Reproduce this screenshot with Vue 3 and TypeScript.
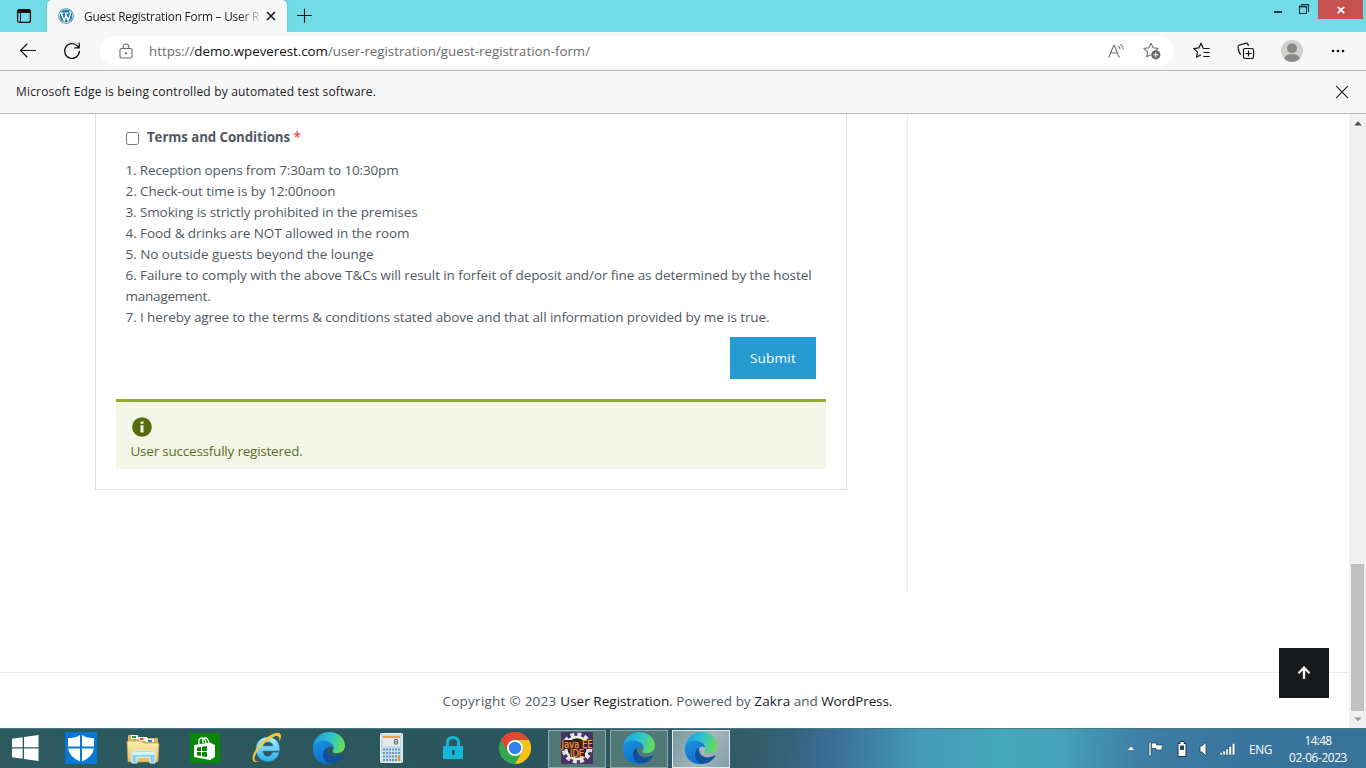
<script setup lang="ts">
interface Line { text: string; width: number }

const terms: Line[] = [
  { text: '1. Reception opens from 7:30am to 10:30pm', width: 273 },
  { text: '2. Check-out time is by 12:00noon', width: 210 },
  { text: '3. Smoking is strictly prohibited in the premises', width: 292 },
  { text: '4. Food & drinks are NOT allowed in the room', width: 284 },
  { text: '5. No outside guests beyond the lounge', width: 248 },
  { text: '6. Failure to comply with the above T&Cs will result in forfeit of deposit and/or fine as determined by the hostel', width: 686 },
  { text: 'management.', width: 85 },
  { text: '7. I hereby agree to the terms & conditions stated above and that all information provided by me is true.', width: 644 },
]

// Tracks a line of text so that it occupies the given width in pixels.
const vFit = {
  mounted(el: HTMLElement, binding: { value: number }) {
    const count = (el.textContent ?? '').trim().length
    const natural = el.getBoundingClientRect().width
    el.style.letterSpacing = `${(binding.value - natural) / count}px`
  },
}
</script>

<template>
  <div class="screen">
    <svg class="defs" width="0" height="0">
      <defs>
        <linearGradient id="eg1" x1="0" y1="0.3" x2="1" y2="0.5"><stop offset="0" stop-color="#1e9de0" /><stop offset=".5" stop-color="#2bc3d2" /><stop offset="1" stop-color="#66dc52" /></linearGradient>
        <linearGradient id="eg2" x1="0" y1="0" x2=".5" y2="1"><stop offset="0" stop-color="#1b93e0" /><stop offset="1" stop-color="#0d6fd0" /></linearGradient>
        <linearGradient id="fold" x1="0" y1="0" x2="0" y2="1"><stop offset="0" stop-color="#fdf0b4" /><stop offset="1" stop-color="#e3c266" /></linearGradient>
        <linearGradient id="ie" x1="0" y1="0" x2="0" y2="1"><stop offset="0" stop-color="#b5efff" /><stop offset="1" stop-color="#29aeea" /></linearGradient>
        <symbol id="edge" viewBox="0 0 32 32">
          <path fill="url(#eg2)" d="M0 15C1 9 6 7 11 8c5 1 9 4 9.500 7.500C15 13 11 17 12 21c1 5 4 9 7 10.700C8 34-1 27 0 15Z" />
          <path fill="#10509f" d="M14 15.500c-1 8 7 13 15.500 7.800.8-.3 1.200.2.800 1C27 30 20 33 15 31 9 28 8 19 14 15.500Z" />
          <path fill="url(#eg1)" d="M0 15C1 6 8 0 16 0c9 0 16 6 16 13.500 0 5.500-4.500 8-9 7.700-3-.2-4.300-1.200-3.200-2.700C23 14 17 8.500 10 8.500 5 8.500 1.500 11 0 15Z" />
        </symbol>
      </defs>
    </svg>

    <header class="tabs">
      <svg class="tabmenu" width="16" height="16" viewBox="0 0 16 16"><rect x="1.6" y="1.6" width="12.8" height="12.8" rx="2" fill="none" stroke="#111" stroke-width="1.3" /><path d="M2 2h12v2.500H2z" fill="#111" stroke="#111" /><path d="M4.500 5v9" stroke="#111" /></svg>
      <div class="tab">
        <svg class="wp" width="16" height="16" viewBox="0 0 16 16"><circle cx="8" cy="8" r="7.8" fill="#247ba5" /><circle cx="8" cy="8" r="6.8" fill="none" stroke="#e8f5fa" stroke-width=".8" /><path d="M2.3 5.1h3.2M6.5 5.1h3.6M3.2 5.2l3 7.6L8.2 7M7.3 5.2l2.8 7.6 2.3-6.5c.3-1-.8-2-.2-2.9" fill="none" stroke="#fff" stroke-width="1.35" /></svg>
        <div class="tabtitle"><span v-fit="175">Guest Registration Form – User R</span></div>
        <svg class="tabx" width="10" height="10" viewBox="0 0 10 10"><path d="m1 1 8 8M9 1 1 9" stroke="#111" stroke-width="1.5" /></svg>
      </div>
      <svg class="plus" width="16" height="16" viewBox="0 0 16 16"><path d="M8.500 .8v14M1 7.500h14.800" stroke="#111" stroke-width="1.1" /></svg>
      <div class="wincontrols">
        <svg width="50" height="19" viewBox="0 0 50 19"><path d="M5 12h8" stroke="#173238" stroke-width="2" /><path d="M30.500 6.500h7v7h-7zM32 4.500h7.500v7.500" fill="none" stroke="#173238" stroke-width="1.1" /><path d="M30 6.500h8" stroke="#173238" stroke-width="1.8" /></svg>
        <div class="close"><svg width="8" height="8" viewBox="0 0 8 8"><path d="m.8.8 6.400 6.400m0-6.400L.8 7.200" stroke="#fff" stroke-width="1.7" /></svg></div>
      </div>
    </header>

    <div class="toolbar">
      <svg class="back" width="18" height="16" viewBox="0 0 18 16" fill="none" stroke="#111" stroke-width="1.2"><path d="M17 7.500H1.500M8.300 .8 1.500 7.500l6.800 6.700" /></svg>
      <svg class="reload" width="18" height="18" viewBox="0 0 18 18" fill="none" stroke="#111" stroke-width="1.3"><path d="M16.4 9a7.4 7.4 0 1 1-2-5.1l1.5 1.7M16.2.8v5h-5" /></svg>
      <div class="address">
        <svg class="lock" width="14" height="16" viewBox="0 0 14 16"><path d="M2.600 5.500h8.800q1.600 0 1.600 1.600v6.300q0 1.600-1.600 1.600H2.600Q1 15 1 13.400V7.100Q1 5.500 2.600 5.500ZM4.200 5.500V3.800a2.800 2.800 0 0 1 5.600 0v1.700" fill="none" stroke="#6c6c6c" stroke-width="1.1" /><circle cx="7" cy="10.300" r="1.100" fill="#666" /></svg>
        <span class="url" v-fit="441">https://<b>demo.wpeverest.com</b>/user-registration/guest-registration-form/</span>
        <svg class="aloud" width="17" height="16" viewBox="0 0 17 16" fill="none" stroke="#707070" stroke-width="1.1"><path d="M.8 14.500 5.800 2.200h.4l5 12.300M2.600 10h6.800M10.500 3.200q1.400 1.200 1.600 3M12.400 1.100q2.600 2.100 2.900 5.200" /></svg>
        <svg class="addstar" width="18" height="18" viewBox="0 0 18 18"><path d="m8 1.200 2.100 4.600 5 .6-2.500 2.300M8 1.200 5.900 5.800l-5 .6 3.700 3.400-1 5 4-2.100" fill="none" stroke="#707070" stroke-width="1.100" stroke-linejoin="round" /><circle cx="12.800" cy="12.800" r="4.600" fill="#666" /><path d="M10.200 12.800h5.200m-2.600-2.600v5.200" stroke="#fff" stroke-width="1.100" /></svg>
      </div>
      <svg class="favs" width="18" height="18" viewBox="0 0 18 18" fill="none" stroke="#111" stroke-width="1.200" stroke-linejoin="round"><path d="M10.200 6.200 8 1.200 5.800 5.900l-5 .7 3.700 3.500-1 5.100L8 12.700M10.200 6.500h6.500M10.500 10.500h6.200M10.500 14.500h6.200" /></svg>
      <svg class="coll" width="18" height="18" viewBox="0 0 18 18" fill="none" stroke="#111" stroke-width="1.200"><path d="M7.200 6.500h7.600q1.700 0 1.700 1.700v6.600q0 1.700-1.700 1.700H8.200q-1.700 0-1.700-1.700V8.200q0-1.700 1.700-1.700M8.500 11.500h6M11.500 8.500v6M4.200 12.500Q2.700 12 2.300 10.500L1 5.500Q.7 3.700 2.500 3l6-1.700q1.600-.4 2.400 1l.6 1.700" /></svg>
      <svg class="avatar" width="22" height="22" viewBox="0 0 22 22"><circle cx="11" cy="11" r="11" fill="#d2d0ce" /><circle cx="11" cy="8.200" r="4.900" fill="#8a8886" /><path d="M3 18.400Q5 14 11 14t8 4.400A11 11 0 0 1 3 18.400Z" fill="#8a8886" /></svg>
      <svg class="dots" width="14" height="4" viewBox="0 0 14 4"><circle cx="2" cy="2" r="1.300" /><circle cx="7" cy="2" r="1.300" /><circle cx="12" cy="2" r="1.300" /></svg>
    </div>

    <div class="infobar">
      <span v-fit="360">Microsoft Edge is being controlled by automated test software.</span>
      <svg width="14" height="14" viewBox="0 0 14 14"><path d="m1.200 1.200 11.600 11.600m0-11.600L1.200 12.800" stroke="#222" stroke-width="1.200" /></svg>
    </div>

    <div class="viewport">
      <main class="page">
        <div class="columns">
          <section class="form">
            <div class="agree"><i class="check"></i><strong v-fit="143">Terms and Conditions</strong><em>*</em></div>
            <div class="terms"><div v-for="line in terms" :key="line.text"><span v-fit="line.width">{{ line.text }}</span></div></div>
            <div class="actions"><button><span v-fit="46">Submit</span></button></div>
            <div class="notice">
              <svg width="20" height="20" viewBox="0 0 20 20"><circle cx="10" cy="10" r="9.800" fill="#576b11" /><path d="M8.500 4.400h3v2.300h-3zM8.500 8.300h3v7.200h-3z" fill="#f4f6e7" /></svg>
              <p><span v-fit="172">User successfully registered.</span></p>
            </div>
          </section>
          <aside class="side"></aside>
        </div>
        <footer class="foot"><span v-fit="117.5">Copyright © 2023 </span><b v-fit="109">User Registration</b><span v-fit="85">. Powered by </span><b v-fit="36">Zakra</b><span v-fit="31"> and </span><b v-fit="71">WordPress.</b></footer>
        <div class="totop"><svg width="14" height="14" viewBox="0 0 14 14"><path d="M7 13V2M1.500 7.200 7 1.700l5.500 5.500" fill="none" stroke="#fff" stroke-width="2.300" /></svg></div>
      </main>
      <div class="scroll">
        <svg width="8" height="5" viewBox="0 0 8 5"><path d="M4 .2 7.800 4.500H.2z" fill="#505050" /></svg>
        <div class="thumb"></div>
        <svg class="down" width="8" height="5" viewBox="0 0 8 5"><path d="M4 4.500 7.800.3H.2z" fill="#a0a0a0" /></svg>
      </div>
    </div>

    <nav class="taskbar">
      <div class="start"><svg width="27" height="26" viewBox="0 0 27 26"><path d="M0 3.800 10.700 2.300v10H0zM12 2.100 26.500 0v12.300H12zM0 13.600h10.700v10.100L0 22.200zM12 13.600h14.500V26L12 23.900z" fill="#fff" /></svg></div>
      <div class="app"><svg width="32" height="32" viewBox="0 0 32 32"><path d="M0 0h32v32H0z" fill="#0878d7" /><path d="M16 2.500q6 4 13 3.500v10q-1 9-13 14Q4 25 3 16V6q7 .5 13-3.500Z" fill="#fff" /><path d="M16 2v29M2 15.500h28" stroke="#0878d7" stroke-width="2" /></svg></div>
      <div class="app"><svg width="34" height="32" viewBox="0 0 34 32"><path d="M2 4q0-1 1-1h7l2 3h19q1 0 1 1v6H2z" fill="#d9b65d" /><path d="M5 3h7v4H5z" fill="#fff" /><path d="M6 4h4v2H6z" fill="#29a33a" /><path d="M12 5h9l1 4h-9z" fill="#fff" /><path d="M14 6h3.500v2H14z" fill="#ca4b24" /><path d="M20 7h8v3h-8z" fill="#fff" /><path d="M22 8h4v2h-4z" fill="#2f83d5" /><path d="M1 10q0-1 1-1h13l3 2h14q1 0 1 1l-1 17q0 1-1 1H3q-1 0-1-1z" fill="url(#fold)" stroke="#bd9b4d" stroke-width=".7" /><path d="M6 22q0-3 3-3h17q3 0 3 3v9h-5v-6H11v6H6z" fill="#8accef" stroke="#d9f5ff" /><path d="M7 20h21v3H7z" fill="#d5f3fd" /></svg></div>
      <div class="app"><svg width="30" height="30" viewBox="0 0 30 30"><path d="M0 0h30v30H0z" fill="#078607" /><path d="M4 12l16-2.500 5 2.500v12l-5 3-16-3z" fill="#fff" /><path d="M9 11q-1-6 3-6 3 0 4 5M13 10q-1-5 2-5t4 5" fill="none" stroke="#fff" stroke-width="1.300" /><path d="m7 14.500 4-.6v4H7zm5-.7 5-.8v5h-5zM7 19h4v4l-4-.6zm5 0h5v5l-5-.8z" fill="#078607" /></svg></div>
      <div class="app"><svg width="32" height="32" viewBox="0 0 32 32"><path fill-rule="evenodd" d="M28 20.500C26.500 26.500 22 29.500 17 29.500 10 29.500 5 24 5 17S10 5 17 5s12 5 11.700 14H12c0 7 7.500 7 9.500 1.500zM12 14h10c-.5-5.500-9-5.500-10 0Z" fill="url(#ie)" stroke="#2c93c9" stroke-width=".6" /><path d="M9 28.500C3 32 0 29 2.500 22 7 12 18 2 26 .8c5 0 5 4 2 9 1-4 0-6.500-4-5.500C16 7 6 18 4 24c-1.500 5 1 6 5 4.500Z" fill="#f7c932" /></svg></div>
      <div class="app"><svg width="32" height="32"><use href="#edge" /></svg></div>
      <div class="app"><svg width="23" height="30" viewBox="0 0 23 30"><rect x=".5" y=".5" width="22" height="29" rx="1" fill="#c6dceb" stroke="#eef7fd" /><path d="M3 3h17v2H3z" fill="#efa33c" /><path d="M3 5h17v8H3z" fill="#e3e9ee" /><path d="M14.500 6.500h3v4.500h-3zM14.500 8.700h3" fill="none" stroke="#375679" stroke-width=".8" /><path d="M3 16.500h17M3 20h17M3 23.500h17M3 27h17" stroke="#6f9ac2" stroke-width="2" stroke-dasharray="2 1" /><path d="M18 22h2v6h-2z" fill="#e59a26" /></svg></div>
      <div class="app"><svg width="22" height="24" viewBox="0 0 22 24"><rect x="1" y="10" width="20" height="13" fill="#17b5da" /><path d="M5.500 11V6.500q0-5 5.500-5t5.500 5V11" fill="none" stroke="#17b5da" stroke-width="3" /><path d="M10 14h2.500v5H10z" fill="#28545e" /></svg></div>
      <div class="app"><svg width="32" height="32" viewBox="0 0 32 32"><circle cx="16" cy="16" r="16" fill="#35a853" /><path d="M2.100 8A16 16 0 0 1 29.900 8H16a8 8 0 0 0-7 12z" fill="#e94335" /><path d="M29.900 8A16 16 0 0 1 16 32l7-12a8 8 0 0 0-7-12z" fill="#fbc116" /><circle cx="16" cy="16" r="8" fill="#fff" /><circle cx="16" cy="16" r="6.200" fill="#367fec" /></svg></div>
      <div class="app open"><svg width="32" height="32" viewBox="0 0 32 32"><path d="M0 0h32v32H0z" fill="#493360" /><circle cx="16" cy="16" r="13.500" fill="none" stroke="#e1dfe3" stroke-width="4" stroke-dasharray="4 3.070" /><circle cx="16" cy="16" r="11" fill="#251c29" stroke="#eee" stroke-width="2.500" /><path d="M0 8h32v9h-8v8H9v-8H0z" fill="#35232b" /><text x=".5" y="16" textLength="31" lengthAdjust="spacingAndGlyphs" class="java">Java EE</text><text x="9" y="24.500" textLength="14" lengthAdjust="spacingAndGlyphs" class="java">IDE</text></svg></div>
      <div class="app open"><svg width="32" height="32"><use href="#edge" /></svg></div>
      <div class="app open active"><svg width="32" height="32"><use href="#edge" /></svg></div>
      <div class="tray">
        <svg class="up" width="8" height="5" viewBox="0 0 8 5"><path d="m4 .3 3.800 4H.2z" fill="#fff" stroke="#234e68" stroke-width=".4" /></svg>
        <svg class="flag" width="18" height="18" viewBox="0 0 18 18"><path d="M2 2h2v14H2z" fill="#fff" stroke="#203f52" stroke-width=".6" /><path d="M4.500 3h5v2h6.500l-1.500 5h-5L9 8.500H4.500z" fill="#fff" stroke="#203f52" stroke-width=".7" /></svg>
        <svg class="battery" width="10" height="16" viewBox="0 0 10 16"><path d="M3 .5h4v2h2v13H1v-13h2z" fill="#fff" stroke="#173342" /><path d="M3 4.500h4v4.500H3z" fill="#244354" /></svg>
        <svg class="volume" width="9" height="16" viewBox="0 0 9 16"><path d="M1 5h2l4-4v14l-4-4H1z" fill="#fff" stroke="#203f52" stroke-width=".8" /></svg>
        <svg class="signal" width="17" height="14" viewBox="0 0 17 14"><path d="M1 10.500h2.200V13H1zM4 9h2.200v4H4zM7 7h2.200v6H7zM10 4.500h2.500V13H10zM13.300 1.500h2.500V13h-2.500z" fill="#fff" stroke="#203f52" stroke-width=".4" /></svg>
        <span class="lang"><span v-fit="23">ENG</span></span>
        <div class="clock"><span v-fit="27">14:48</span><span v-fit="58">02-06-2023</span></div>
      </div>
    </nav>
  </div>
</template>

<style scoped>
.screen { width: 1366px; height: 768px; overflow: hidden; display: flex; flex-direction: column; background: #fff; font-family: "Open Sans", "Noto Sans", sans-serif; color: #1b1b1b; white-space: nowrap; position: relative; }
.defs { position: absolute; }
svg { display: block; flex: none; }
.tabs { height: 32px; flex: none; background: #71dbe8; display: flex; align-items: flex-start; }
.tabmenu { margin: 8px 15px 0 16px; }
.tab { width: 240px; height: 32px; background: #f7f7f7; border-radius: 5px 5px 0 0; box-sizing: border-box; display: flex; align-items: center; padding-left: 11px; box-shadow: 0 0 2px #4aa8b4; clip-path: inset(0 -2px); }
.tabtitle { margin-left: 10px; width: 178px; font-size: 11.800px; line-height: 20px; -webkit-mask-image: linear-gradient(90deg, #000 155px, transparent 180px); mask-image: linear-gradient(90deg, #000 155px, transparent 180px); }
.tabx { margin-left: 4px; }
.plus { margin: 8px 0 0 9px; }
.wincontrols { margin-left: auto; display: flex; }
.wincontrols > svg { margin-right: -1px; }
.close { width: 45px; height: 19px; background: #c75050; margin-right: 3px; display: flex; align-items: center; justify-content: center; }
.toolbar { height: 38px; flex: none; background: #f7f7f7; border-bottom: 1px solid #b9b9b9; display: flex; align-items: center; }
.back { margin-left: 19px; }
.reload { margin-left: 26px; }
.address { margin-left: 19px; width: 1074px; height: 30px; border-radius: 15px; background: #fff; display: flex; align-items: center; }
.lock { margin-left: 19px; }
.url { margin-left: 16px; font-size: 13.300px; color: #6b6b6b; }
.url b { color: #111; font-weight: 400; }
.aloud { margin-left: 518px; }
.addstar { margin-left: 18px; }
.favs { margin-left: 19px; }
.coll { margin-left: 26px; }
.avatar { margin-left: 26px; }
.dots { margin-left: 28px; fill: #111; }
.infobar { height: 42px; flex: none; background: #f7f7f7; border-bottom: 1px solid #b9b9b9; display: flex; align-items: center; justify-content: space-between; padding: 0 17px 0 16px; font-size: 12px; }
.infobar span { margin-bottom: 2px; }
.viewport { height: 614px; display: flex; }
.page { width: 1349px; position: relative; color: #515962; font-size: 13.500px; }
.columns { height: 558px; display: flex; align-items: flex-start; }
.form { margin-left: 95px; width: 752px; height: 376px; box-sizing: border-box; border: 1px solid #dedfe1; border-top: 0; padding: 0 20px; }
.agree { display: flex; align-items: center; height: 24px; padding: 12px 0 0 10px; }
.agree strong { margin-left: 8px; font-size: 13.300px; position: relative; top: -1px; }
.agree em { font-style: normal; color: #f04c4c; margin-left: 3.500px; line-height: 20px; font-weight: 600; position: relative; top: -1px; }
.check { width: 13px; height: 13px; box-sizing: border-box; border: 1px solid #767676; border-radius: 2.500px; }
.terms { margin: 10px 0 0 9.500px; line-height: 21px; }
.actions { display: flex; justify-content: flex-end; padding: 9px 10px 0; }
button { width: 86px; height: 42px; border: 0; padding: 0; background: #269bd1; color: #fff; font: 500 13.500px "Open Sans", sans-serif; }
.notice { margin-top: 20px; height: 70px; box-sizing: border-box; border-top: 3px solid #8fae2c; background: #f4f6e7; padding: 15px 0 0 14.500px; color: #5d6f25; }
.notice svg { margin-left: 1.500px; }
.notice p { margin: 4px 0 0; line-height: 21px; }
.side { margin-left: 60px; width: 1px; height: 478px; background: #e9ecef; }
.foot { height: 55px; border-top: 1px solid #e9ecef; display: flex; align-items: center; padding-left: 442.500px; }
.foot span { white-space: pre; }
.foot b { color: #16181a; font-weight: 400; }
.totop { position: absolute; right: 20px; bottom: 30px; width: 50px; height: 50px; background: #16181a; display: flex; align-items: center; justify-content: center; }
.scroll { width: 17px; background: #f1f1f1; display: flex; flex-direction: column; align-items: center; padding-top: 7px; box-sizing: border-box; }
.thumb { width: 13px; height: 147px; background: #c1c1c1; margin-top: 438px; }
.down { margin-top: 6px; }
.taskbar { height: 40px; flex: none; box-sizing: border-box; border-top: 1px solid #477784; background: linear-gradient(93deg, #2d5a5e 0, #2b555d 600px, #335c69 750px, #36627a 790px, #3b6d96 830px, #3e80a6 870px, #449bb8 920px, #45a8bb 1000px, #45a4ba 1060px, #4393b3 1090px, #3f7ea6 1140px, #38759e 1250px, #387398 1366px); display: flex; align-items: center; color: #fff; }
.start { width: 50px; padding-left: 12px; box-sizing: border-box; margin-top: -2px; }
.app { width: 58px; height: 38px; margin-right: 4px; display: flex; align-items: center; justify-content: center; box-sizing: border-box; flex: none; }
.start + .app { margin-left: 2px; }
.app > svg { margin-top: -2px; }
.open { border: 1px solid #8faaad; background: #527777; }
.active { border-color: #e3ebed; background: linear-gradient(120deg, #78999f, #a4b6ba 55%, #829fab); }
.java { font: 10px "DejaVu Sans", sans-serif; fill: #ff9a2e; stroke: #ff9a2e; stroke-width: .25px; }
.tray { margin-left: auto; display: flex; align-items: center; height: 39px; padding-right: 19px; }
.flag { margin-left: 12px; }
.battery { margin-left: 12px; }
.volume { margin-left: 12px; }
.signal { margin-left: 11px; }
.lang { margin-left: 13px; font-size: 11.800px; width: 23px; }
.clock { margin-left: 17px; width: 58px; display: flex; flex-direction: column; align-items: center; font-size: 11.800px; line-height: 17px; }
</style>
<style>
body { margin: 0; overflow: hidden; }
</style>
